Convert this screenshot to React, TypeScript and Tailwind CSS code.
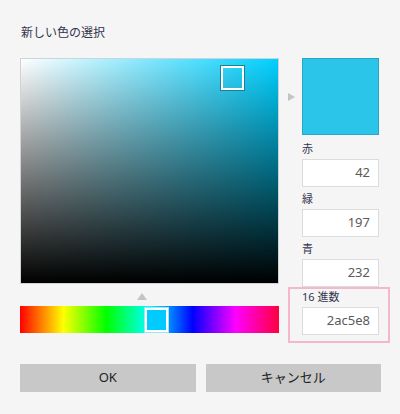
import React from "react";

const font = "font-['Noto_Sans','Noto_Sans_CJK_JP',sans-serif]";

function Field({ label, value }: { label: string; value: string }) {
  return (
    <div className="flex flex-col">
      <div className="h-[14px] text-[11px] leading-[14px] text-[#34344c]">{label}</div>
      <div className="mt-[3px] flex h-[28px] items-center justify-end border border-[#dcdcdc] bg-white pr-[8px] text-[13px] text-[#5a5a5a]">
        {value}
      </div>
    </div>
  );
}

export default function App() {
  return (
    <div className={`${font} flex h-[414px] w-[400px] flex-col bg-[#f5f5f5] pl-[20px] pt-[24px]`}>
      <div className="h-[17px] pl-[1px] text-[12px] leading-[17px] text-[#34344c]">新しい色の選択</div>
      <div className="mt-[17px] flex items-start">
        <div className="flex w-[259px] flex-col">
          <div className="relative h-[226px] border border-[#cfd3d6] bg-[#00d0ff]">
            <div className="absolute inset-0 bg-gradient-to-r from-white to-transparent" />
            <div className="absolute inset-0 bg-gradient-to-b from-transparent to-black" />
            <div className="absolute left-[200px] top-[7px] h-[24px] w-[23px] border-2 border-white outline outline-1 outline-[#1f7f96]" />
          </div>
          <div className="relative h-[22px]">
            <div className="absolute left-[117px] top-[9px] h-0 w-0 border-x-[5px] border-b-[7px] border-x-transparent border-b-[#c4c4c4]" />
          </div>
          <div className="relative h-[27px] bg-[linear-gradient(to_right,#ff0000_0%,#ffff00_16.7%,#00ff00_33.3%,#00ffff_50%,#0000ff_66.7%,#ff00ff_83.3%,#ff0040_100%)]">
            <div className="absolute left-[125px] top-[2px] h-[24px] w-[23px] border-2 border-white bg-[#00cbff] outline outline-1 outline-[#9fe3f5]" />
          </div>
        </div>
        <div className="flex w-[23px] justify-center pt-[35px]">
          <div className="ml-[1px] h-0 w-0 border-y-[4px] border-l-[7px] border-y-transparent border-l-[#c4c4c4]" />
        </div>
        <div className="flex w-[77px] flex-col">
          <div className="h-[77px] border border-[#27a6c6] bg-[#2ac5e8]" />
          <div className="mt-[7px] flex flex-col gap-[5px]">
            <Field label="赤" value="42" />
            <Field label="緑" value="197" />
            <Field label="青" value="232" />
          </div>
          <div className="-ml-[14px] -mr-[11px] border-2 border-[#f4b8cd] pb-[6px] pl-[12px] pr-[9px] pt-[1px]">
            <Field label="16 進数" value="2ac5e8" />
          </div>
        </div>
      </div>
      <div className="mt-[21px] flex w-[361px] gap-[10px]">
        <div className="flex h-[28px] flex-1 items-center justify-center bg-[#c8c8c8] text-[13px] text-[#222]">OK</div>
        <div className="flex h-[28px] flex-1 items-center justify-center bg-[#c8c8c8] text-[13px] text-[#222]">キャンセル</div>
      </div>
    </div>
  );
}
